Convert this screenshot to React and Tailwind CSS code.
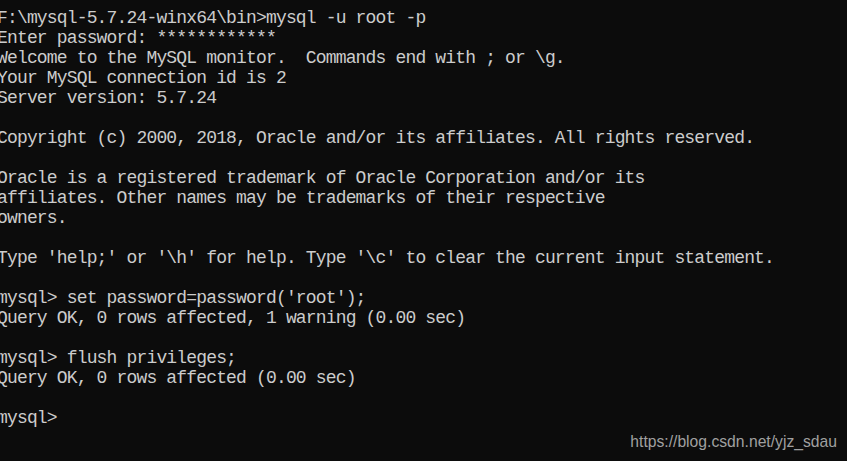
import React from "react";

const lines = [
  "F:\\mysql-5.7.24-winx64\\bin>mysql -u root -p",
  "Enter password: ************",
  "Welcome to the MySQL monitor.  Commands end with ; or \\g.",
  "Your MySQL connection id is 2",
  "Server version: 5.7.24",
  "",
  "Copyright (c) 2000, 2018, Oracle and/or its affiliates. All rights reserved.",
  "",
  "Oracle is a registered trademark of Oracle Corporation and/or its",
  "affiliates. Other names may be trademarks of their respective",
  "owners.",
  "",
  "Type 'help;' or '\\h' for help. Type '\\c' to clear the current input statement.",
  "",
  "mysql> set password=password('root');",
  "Query OK, 0 rows affected, 1 warning (0.00 sec)",
  "",
  "mysql> flush privileges;",
  "Query OK, 0 rows affected (0.00 sec)",
  "",
  "mysql>",
];

const App = () => {
  return (
    <div className="relative w-[847px] h-[461px] overflow-hidden bg-[#0c0c0c]">
      {/* console output */}
      <div className="pt-2 -ml-[3px] text-[#cccccc] font-['Liberation_Mono',monospace] text-[18px] leading-[20px] tracking-[-0.84px]">
        {lines.map((line, i) => (
          <div key={i} className="h-[20px] whitespace-pre">
            {line}
          </div>
        ))}
      </div>
      {/* watermark */}
      <span className="absolute right-[10px] bottom-[11px] text-[15.7px] leading-[16px] text-[#a0a0a0] font-['Liberation_Sans',Arial,sans-serif]">
        https://blog.csdn.net/yjz_sdau
      </span>
    </div>
  );
};

export default App;
